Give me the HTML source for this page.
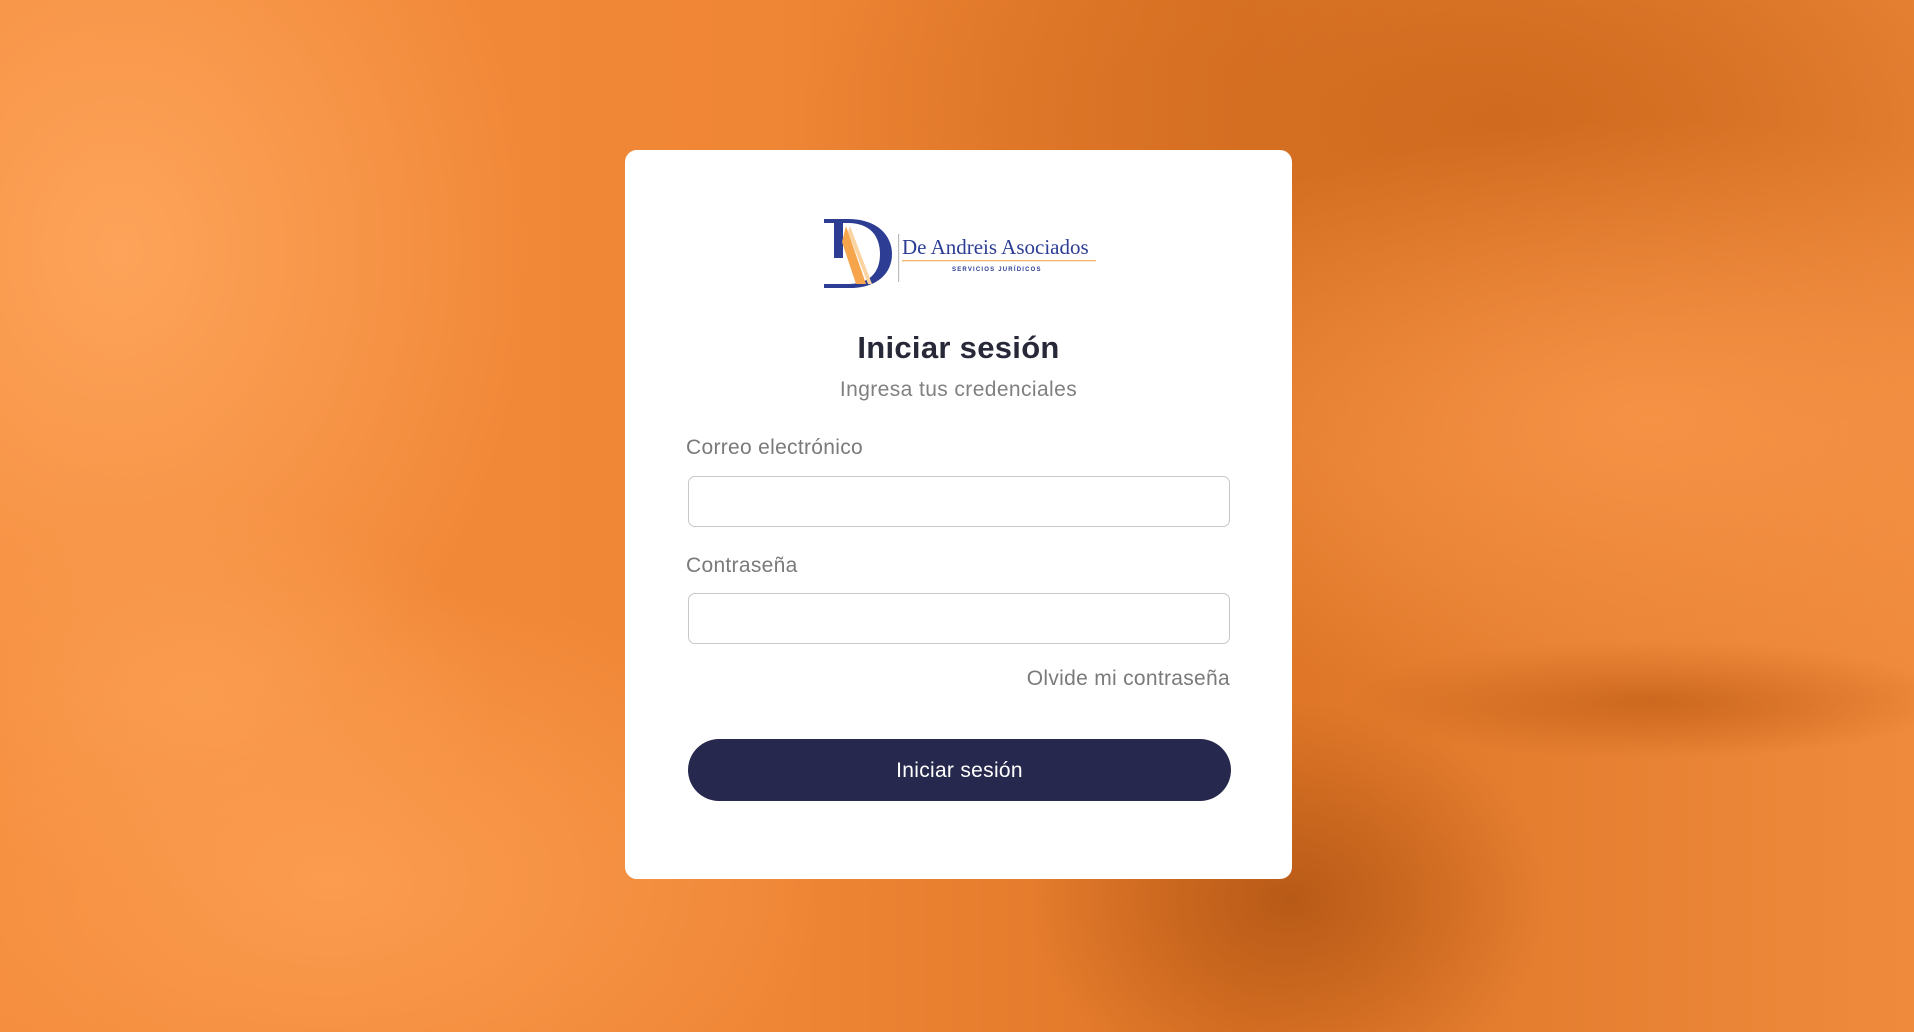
<!DOCTYPE html>
<html><head><meta charset="utf-8"><style>
html,body{margin:0;padding:0;width:1914px;height:1032px;overflow:hidden;font-family:"Liberation Sans",sans-serif}
.bg{position:absolute;inset:0;background:
radial-gradient(ellipse 420px 520px at 120px 250px,#fda45a 0%,rgba(253,164,90,0) 100%),
radial-gradient(ellipse 500px 300px at 330px 880px,#fb9c4f 0%,rgba(251,156,79,0) 100%),
radial-gradient(ellipse 300px 200px at 200px 700px,#f99a4c 0%,rgba(249,154,76,0) 100%),
radial-gradient(ellipse 600px 300px at 1650px 420px,#f59245 0%,rgba(245,146,69,0) 100%),
radial-gradient(ellipse 700px 350px at 1500px 120px,#cf6a1e 0%,rgba(207,106,30,0) 100%),
radial-gradient(ellipse 260px 200px at 1290px 900px,#b85a17 0%,rgba(184,90,23,0) 100%),
radial-gradient(ellipse 300px 60px at 1650px 700px,#c9651c 0%,rgba(201,101,28,0) 100%),
linear-gradient(90deg,#f48b3b 0%,#ef8636 40%,#de7526 65%,#ef8a3c 100%);}
.card{position:absolute;left:625px;top:150px;width:667px;height:729px;background:#fff;border-radius:12px}
.abs{position:absolute}
.title{left:0;width:667px;top:330px;text-align:center;font-size:31px;font-weight:bold;color:#272838;letter-spacing:0.3px}
.sub{left:0;width:667px;top:378px;text-align:center;font-size:21px;color:#808080;letter-spacing:0.4px}
.lbl{left:686px;font-size:21px;color:#7a7a7a;letter-spacing:0.3px}
.inp{left:688px;width:540px;height:49px;border:1.5px solid #c8c8c8;border-radius:7px;background:#fff}
.btn{left:688px;top:739px;width:543px;height:62px;border-radius:31px;background:#26294d;color:#fff;font-size:21px;text-align:center;line-height:64px;letter-spacing:0.3px}
</style></head><body>
<div class="bg"></div>
<div class="card"></div>
<svg class="abs" style="left:820px;top:214px" width="280" height="80" viewBox="0 0 280 80">
<path d="M4 5 H28 C58 5 72 22 72 40 C72 60 56 74 30 74 H4 V70 H28 C50 70 60 58 60 40 C60 22 50 9 28 9 H4Z" fill="#2c3d93"/>
<rect x="14" y="6" width="9" height="38" fill="#2c3d93"/>
<path d="M26 12 L46 70 L36 70 L22 28Z" fill="#f6a54c"/>
<path d="M30 12 L52 70 L48 70 L28 18Z" fill="#fbd3a0"/>
<rect x="78" y="20" width="1.2" height="48" fill="#bbb"/>
<text x="82" y="40" font-family="Liberation Serif,serif" font-size="21" fill="#2c3d93">De Andreis Asociados</text>
<rect x="82" y="46" width="194" height="1.3" fill="#f3b56e"/>
<text x="132" y="57" font-family="Liberation Sans,sans-serif" font-size="6" font-weight="bold" letter-spacing="1.2" fill="#2c3d93">SERVICIOS JURÍDICOS</text>
</svg>
<div class="abs title" style="left:625px">Iniciar sesión</div>
<div class="abs sub" style="left:625px">Ingresa tus credenciales</div>
<div class="abs lbl" style="top:436px">Correo electrónico</div>
<div class="abs inp" style="top:476px"></div>
<div class="abs lbl" style="top:554px">Contraseña</div>
<div class="abs inp" style="top:593px"></div>
<div class="abs lbl" style="top:667px;left:auto;right:684px">Olvide mi contraseña</div>
<div class="abs btn">Iniciar sesión</div>
</body></html>
